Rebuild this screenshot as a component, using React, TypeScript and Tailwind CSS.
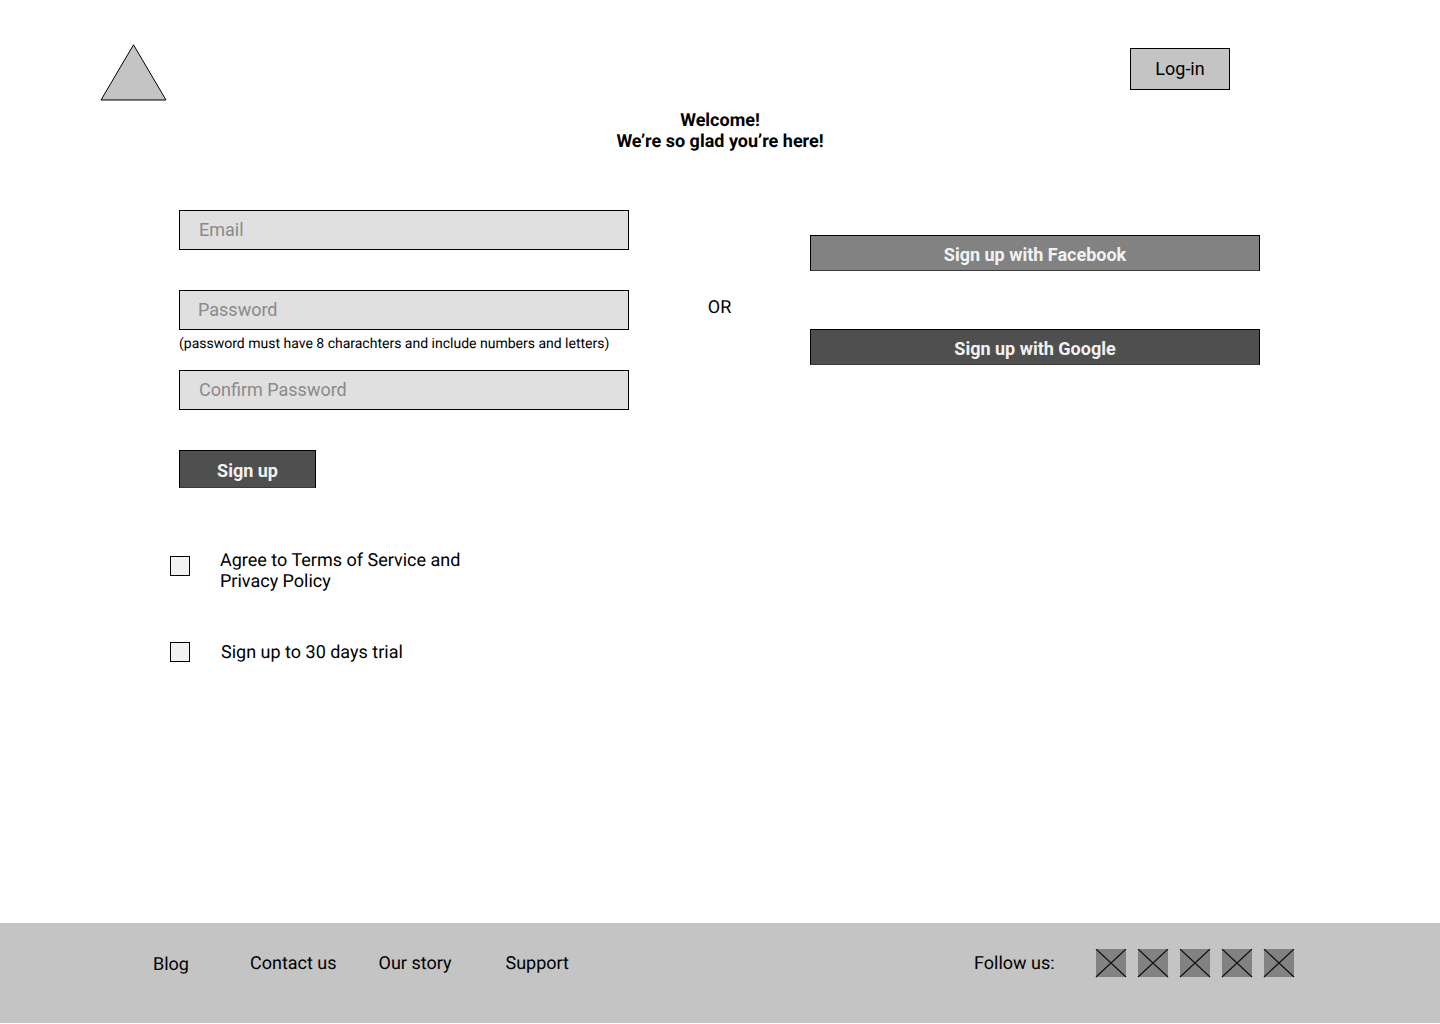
import React from "react";

const inputClass =
  "block w-[450px] h-10 border border-black bg-[#e0e0e0] pl-[19px] pb-0.5 text-lg text-black placeholder:text-[#8a8a8a] outline-none";

const SocialIcon: React.FC = () => (
  <svg width="32" height="29" viewBox="0 0 32 29" className="block">
    <rect x="1" y="0" width="30" height="28" fill="#828282" />
    <path d="M1 0L31 28M31 0L1 28" stroke="#111" strokeWidth="1.2" fill="none" />
  </svg>
);

const App: React.FC = () => {
  return (
    <div className="w-[1440px] h-[1023px] bg-white flex flex-col font-['Roboto',sans-serif] text-black [text-rendering:geometricPrecision]">
      {/* Header */}
      <header className="h-[110px] pt-11 pl-[100px] pr-[210px] flex justify-between items-start">
        <svg width="67" height="57" viewBox="0 0 67 57" className="block">
          <path d="M33.5 0.8L66 56H1Z" fill="#c4c4c4" stroke="#000" strokeWidth="1" />
        </svg>
        <button className="mt-1 w-[100px] h-[42px] border border-black bg-[#c4c4c4] pb-0.5 text-lg leading-[21px]">
          Log-in
        </button>
      </header>

      <h1 className="text-lg leading-[21px] font-bold text-center">
        Welcome!
        <br />
        We’re so glad you’re here!
      </h1>

      {/* Form */}
      <main className="flex-1 flex pt-[58px] pl-[170px]">
        <div className="w-[459px]">
          <div className="pl-[9px]">
            <input className={inputClass} placeholder="Email" />
            <input className={`${inputClass} mt-10 !pl-[18px]`} placeholder="Password" />
            <p className="mt-1.5 h-[16px] text-sm leading-[16px] whitespace-nowrap">
              (password must have 8 charachters and include numbers and letters)
            </p>
            <input className={`${inputClass} mt-[18px]`} placeholder="Confirm Password" />
            <button className="mt-10 block w-[137px] h-[38px] border border-black border-b-[#3a3a3a] bg-[#4f4f4f] pt-0.5 text-lg leading-[21px] font-bold text-[#f2f2f2]">
              Sign up
            </button>
          </div>

          <label className="mt-[61px] flex items-start">
            <input
              type="checkbox"
              className="appearance-none mt-[7px] w-5 h-5 border border-black bg-[#f2f2f2]"
            />
            <span className="ml-[30px] pt-px text-lg leading-[21px]">
              Agree to Terms of Service and
              <br />
              Privacy Policy
            </span>
          </label>

          <label className="mt-[49px] flex items-start">
            <input
              type="checkbox"
              className="appearance-none mt-px w-5 h-5 border border-black bg-[#f2f2f2]"
            />
            <span className="ml-[31px] pt-px text-lg leading-[21px]">Sign up to 30 days trial</span>
          </label>
        </div>

        <div className="w-[181px] pt-[87px] text-center text-lg leading-[21px]">OR</div>

        <div className="w-[450px] pt-[25px]">
          <button className="block w-full h-9 border border-black border-b-[#3a3a3a] bg-[#828282] pt-0.5 text-lg leading-[21px] font-bold text-[#f2f2f2]">
            Sign up with Facebook
          </button>
          <button className="mt-[58px] block w-full h-9 border border-black border-b-[#3a3a3a] bg-[#4f4f4f] pt-0.5 text-lg leading-[21px] font-bold text-[#f2f2f2]">
            Sign up with Google
          </button>
        </div>
      </main>

      {/* Footer */}
      <footer className="h-[100px] bg-[#c4c4c4] pt-[26px] flex items-start text-lg leading-[29px]">
        <a className="ml-[153px] pt-px">Blog</a>
        <a className="ml-[61px]">Contact us</a>
        <a className="ml-[42px]">Our story</a>
        <a className="ml-[54px]">Support</a>
        <span className="ml-[405px]">Follow us:</span>
        <div className="ml-[40px] flex gap-[10px]">
          <SocialIcon />
          <SocialIcon />
          <SocialIcon />
          <SocialIcon />
          <SocialIcon />
        </div>
      </footer>
    </div>
  );
};

export default App;
